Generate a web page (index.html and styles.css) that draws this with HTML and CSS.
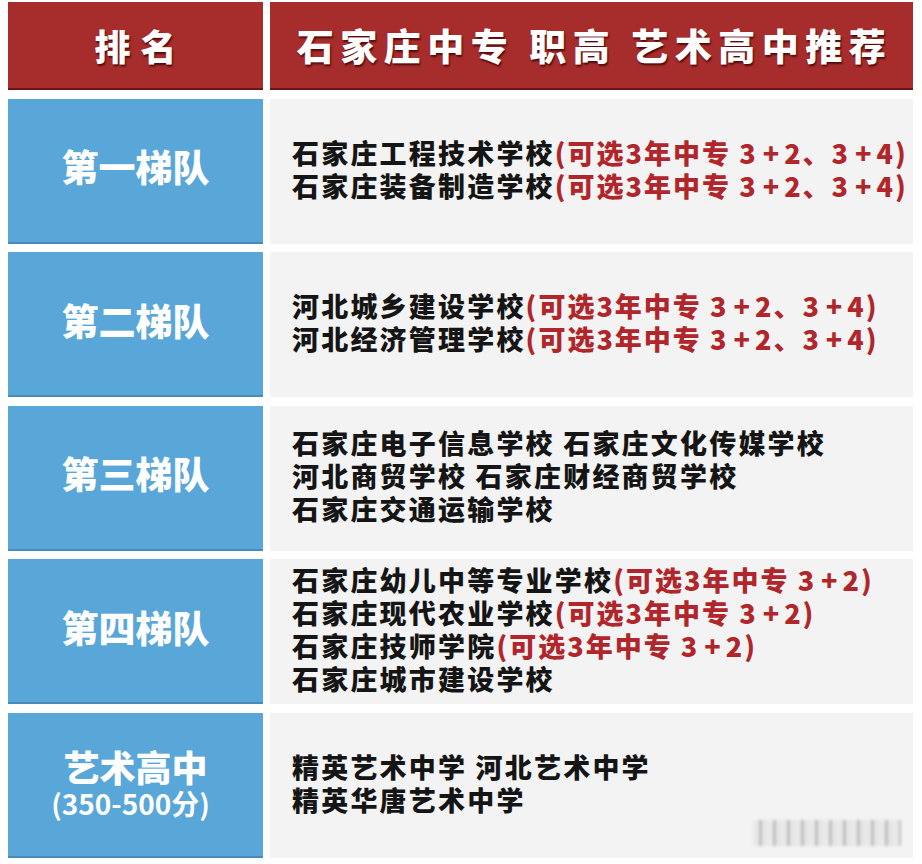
FILE: index.html
```html
<!DOCTYPE html>
<html lang="zh-CN">
<head>
<meta charset="utf-8">
<title>石家庄中专 职高 艺术高中推荐</title>
<link rel="stylesheet" href="styles.css">
</head>
<body>
<div class="table">
  <div class="head head-left">排名</div>
  <div class="head head-right">石家庄中专 职高 艺术高中推荐</div>

  <div class="rank">第一梯队</div>
  <div class="list">
    <div class="line">石家庄工程技术学校<span class="note">(可选3年中专 3<span class="op">+</span>2、3<span class="op">+</span>4)</span></div>
    <div class="line">石家庄装备制造学校<span class="note">(可选3年中专 3<span class="op">+</span>2、3<span class="op">+</span>4)</span></div>
  </div>

  <div class="rank">第二梯队</div>
  <div class="list">
    <div class="line">河北城乡建设学校<span class="note">(可选3年中专 3<span class="op">+</span>2、3<span class="op">+</span>4)</span></div>
    <div class="line">河北经济管理学校<span class="note">(可选3年中专 3<span class="op">+</span>2、3<span class="op">+</span>4)</span></div>
  </div>

  <div class="rank">第三梯队</div>
  <div class="list">
    <div class="line">石家庄电子信息学校 石家庄文化传媒学校</div>
    <div class="line">河北商贸学校 石家庄财经商贸学校</div>
    <div class="line">石家庄交通运输学校</div>
  </div>

  <div class="rank">第四梯队</div>
  <div class="list">
    <div class="line">石家庄幼儿中等专业学校<span class="note">(可选3年中专 3<span class="op">+</span>2)</span></div>
    <div class="line">石家庄现代农业学校<span class="note">(可选3年中专 3<span class="op">+</span>2)</span></div>
    <div class="line">石家庄技师学院<span class="note">(可选3年中专 3<span class="op">+</span>2)</span></div>
    <div class="line">石家庄城市建设学校</div>
  </div>

  <div class="rank rank-art">
    <div class="art-title">艺术高中</div>
    <div class="art-sub">(350-500分)</div>
  </div>
  <div class="list list-last">
    <div class="line">精英艺术中学 河北艺术中学</div>
    <div class="line">精英华唐艺术中学</div>
    <div class="watermark"></div>
  </div>
</div>
</body>
</html>
```

FILE: styles.css
```css
html, body {
  margin: 0;
  padding: 0;
  background: #ffffff;
}

body {
  font-family: "Noto Sans CJK SC", "Noto Sans", sans-serif;
  padding: 2px 9px 0 8px;
}

.table {
  display: grid;
  grid-template-columns: 255px 643px;
  grid-template-rows: 88px repeat(5, 145px);
  column-gap: 7px;
  row-gap: 8.5px;
}

.head {
  background: #a72d2c;
  border-bottom: 2px solid #6e1514;
  box-sizing: border-box;
  color: #ffffff;
  font-weight: 900;
  display: flex;
  align-items: center;
  justify-content: center;
  text-shadow: 1px 2px 2px rgba(60, 0, 0, 0.8);
  margin-bottom: 0.5px;
}

.head-left {
  font-size: 36px;
  letter-spacing: 10px;
  padding-left: 10px;
}

.head-right {
  font-size: 37px;
  letter-spacing: 6.5px;
  padding-left: 6px;
  white-space: nowrap;
}

.rank {
  background: #59a6d8;
  box-shadow: inset 0 -2px 0 rgba(40, 90, 130, 0.35);
  color: #ffffff;
  font-weight: 900;
  font-size: 37px;
  display: flex;
  align-items: center;
  justify-content: center;
  padding-bottom: 10px;
  box-sizing: border-box;
}

.rank-art {
  flex-direction: column;
  padding-bottom: 4px;
}

.art-title {
  font-size: 36px;
  line-height: 40px;
}

.art-sub {
  font-size: 28px;
  line-height: 34px;
  font-weight: 700;
  margin-left: -10px;
}

.list {
  background: #f3f3f3;
  display: flex;
  flex-direction: column;
  justify-content: center;
  padding-left: 22px;
  padding-bottom: 5px;
  box-sizing: border-box;
  position: relative;
}

.line {
  font-size: 27px;
  font-weight: 900;
  color: #151515;
  line-height: 33px;
  letter-spacing: 2.2px;
  white-space: nowrap;
}

.note {
  color: #b0262b;
  letter-spacing: 2px;
}

.op {
  padding: 0 5px;
  letter-spacing: 0;
}

.watermark {
  position: absolute;
  right: 12px;
  bottom: 12px;
  width: 148px;
  height: 26px;
  background: repeating-linear-gradient(90deg, rgba(0,0,0,0.04) 0 6px, rgba(0,0,0,0.22) 6px 9px, rgba(0,0,0,0.05) 9px 14px);
  filter: blur(1.5px);
}
```
